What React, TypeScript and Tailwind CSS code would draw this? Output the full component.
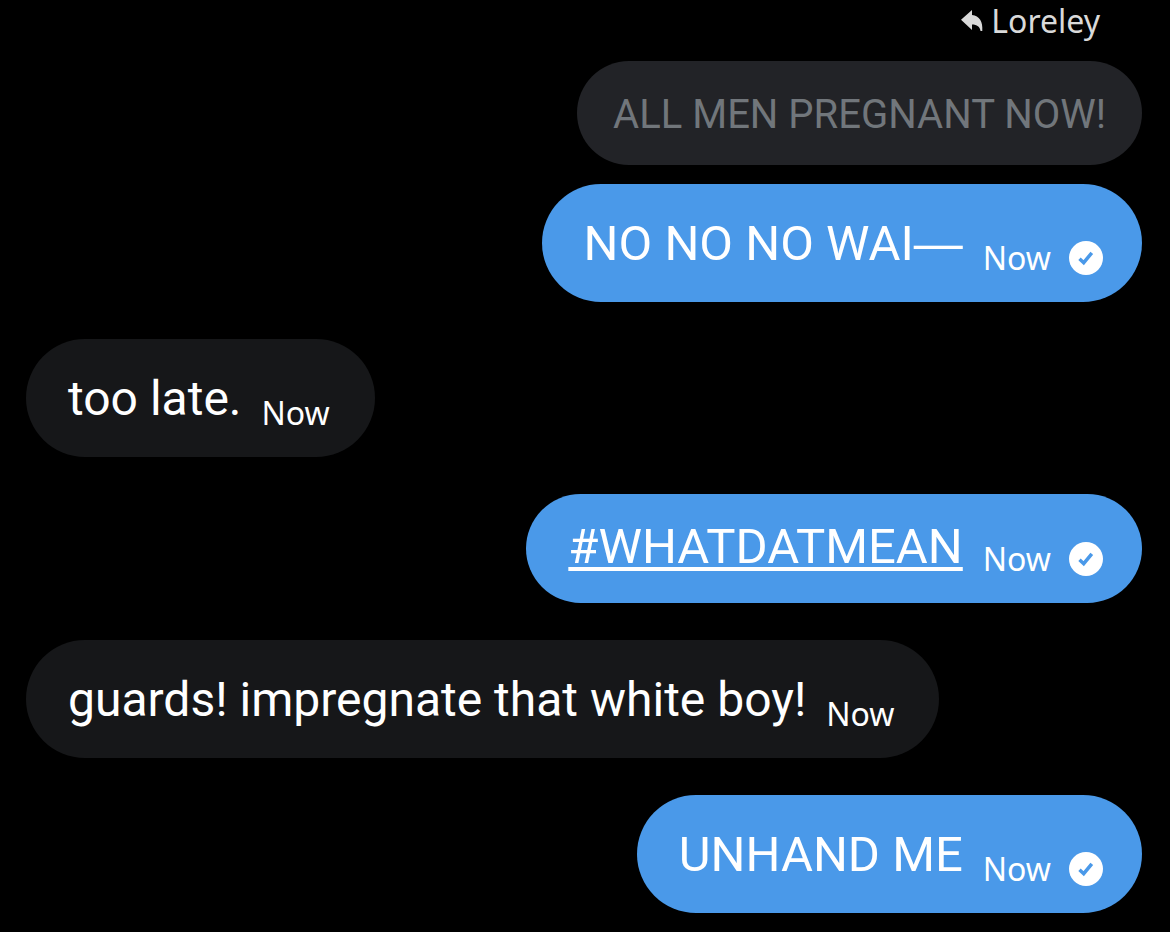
import type { ReactNode } from "react";

type MessageProps = {
  children: ReactNode;
  sent?: boolean;
  hashtag?: boolean;
};

const ReplyIcon = () => (
  <svg viewBox="0 0 22 22" className="h-[22px] w-[22px]" fill="currentColor" aria-hidden="true">
    <path d="M0 9.800 11 0v5C18.500 5.800 22 11.500 21.300 21h-1.800C19 16.800 16 14.600 11 14.600V20Z" />
  </svg>
);

const SentIcon = () => (
  <svg viewBox="0 0 34 34" className="h-[34px] w-[34px]" role="img" aria-label="Sent">
    <circle cx="17" cy="17" r="17" fill="#fff" />
    <path d="M10.500 17.800 14.700 21.700 22.800 11.800" fill="none" stroke="#4a99e9" strokeWidth="3.500" />
  </svg>
);

const Message = ({ children, sent, hashtag }: MessageProps) => {
  return (
    <div
      className={`flex max-w-full items-end gap-5 rounded-full pl-[42px] pb-6 text-white ${
        sent ? "self-end bg-[#4a99e9] pr-[39px] text-[49px]" : "self-start bg-[#161719] pr-[45px] text-[48px]"
      } ${hashtag ? "pt-[25px]" : "pt-[30px]"}`}
    >
      {hashtag ? (
        <a
          href="#whatdatmean"
          className="mb-1 leading-[56px] underline decoration-4 underline-offset-4 [text-decoration-skip-ink:none]"
        >
          {children}
        </a>
      ) : (
        <p className="mb-1 leading-[60px]">{children}</p>
      )}
      <div className="flex items-center gap-[18px] font-['Noto_Sans',sans-serif] text-[32px] leading-[40px]">
        <span>Now</span>
        {sent && <SentIcon />}
      </div>
    </div>
  );
};

export default function App() {
  return (
    <main className="min-h-screen bg-black font-['Roboto',sans-serif]">
      <div className="flex flex-col gap-[37px] pl-[26px] pr-7 pb-[19px]">
        <div className="flex flex-col items-end">
          <div className="mb-5 mr-[42px] flex items-center gap-2 font-['Noto_Sans',sans-serif] text-[32px] leading-[41px] text-[#d9d9d9]">
            <ReplyIcon />
            <span>Loreley</span>
          </div>
          <p className="mb-[19px] rounded-full bg-[#222327] px-9 pt-7 pb-6 text-[40px] leading-[52px] text-[#71767b]">
            ALL MEN PREGNANT NOW!
          </p>
          <Message sent>
            NO NO NO WAI<span className="font-['Liberation_Sans',sans-serif] leading-none">—</span>
          </Message>
        </div>
        <Message>too late.</Message>
        <Message sent hashtag>
          #WHATDATMEAN
        </Message>
        <Message>guards! impregnate that white boy!</Message>
        <Message sent>UNHAND ME</Message>
      </div>
    </main>
  );
}
